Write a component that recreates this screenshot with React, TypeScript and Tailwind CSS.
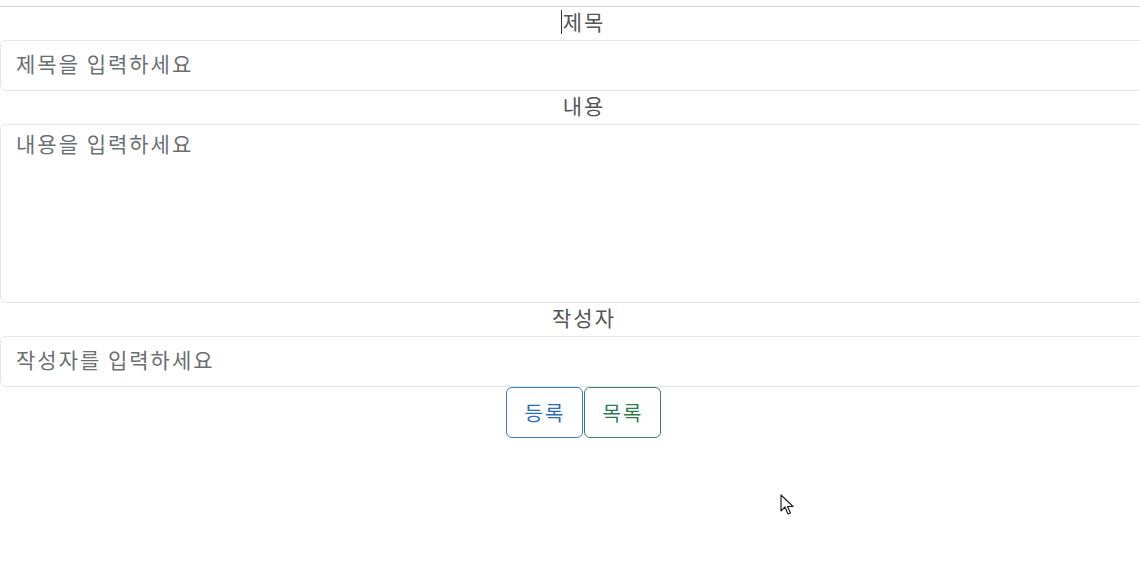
import React from "react";

export default function App() {
  const font = { fontFamily: '"Noto Sans CJK KR", "Noto Sans", sans-serif' };
  return (
    <div className="relative h-[568px] w-[1140px] overflow-hidden bg-white" style={font}>
      <div className="h-[6px]" />
      <div className="flex w-[1166px] flex-col border-t border-[#d4d4d4]">
        <div className="flex h-[33px] items-center justify-center pb-[4px] pl-[2px] text-[21px] tracking-[2px] text-[#555]">
          <span className="relative">
            <span className="absolute -left-[2px] top-[4px] h-[24px] w-[1px] bg-[#333]" />
            제목
          </span>
        </div>
        <div className="flex h-[51px] items-center rounded-[6px] border border-[#e3e5e8] px-[15px] pb-[3px] text-[21px] tracking-[2px] text-[#6b6f73]">
          제목을 입력하세요
        </div>
        <div className="flex h-[33px] items-center justify-center pb-[4px] pl-[2px] text-[21px] tracking-[2px] text-[#555]">내용</div>
        <div className="h-[179px] rounded-[6px] border border-[#e3e5e8] px-[15px] pt-[3px] text-[21px] tracking-[2px] text-[#6b6f73]">
          내용을 입력하세요
        </div>
        <div className="flex h-[33px] items-center justify-center pb-[4px] pl-[2px] text-[21px] tracking-[2px] text-[#555]">작성자</div>
        <div className="flex h-[51px] items-center rounded-[6px] border border-[#e3e5e8] px-[15px] pb-[3px] text-[21px] tracking-[2px] text-[#6b6f73]">
          작성자를 입력하세요
        </div>
        <div className="flex justify-center gap-[1px]">
          <button className="h-[51px] w-[77px] rounded-[6px] border border-[#3d7cc4] pl-[2px] text-[20px] tracking-[2px] text-[#2e6db5]">
            등록
          </button>
          <button className="h-[51px] w-[77px] rounded-[6px] border border-[#3a8557] pl-[2px] text-[20px] tracking-[2px] text-[#2f7d4c]">
            목록
          </button>
        </div>
      </div>
      <svg className="absolute left-[780px] top-[494px]" width="16" height="24" viewBox="0 0 16 24">
        <path d="M1 1 L1 17 L5 13 L8 20 L10.5 19 L7.5 12.5 L13 12.5 Z" fill="white" stroke="#222" strokeWidth="1.2" strokeLinejoin="round" />
      </svg>
    </div>
  );
}
